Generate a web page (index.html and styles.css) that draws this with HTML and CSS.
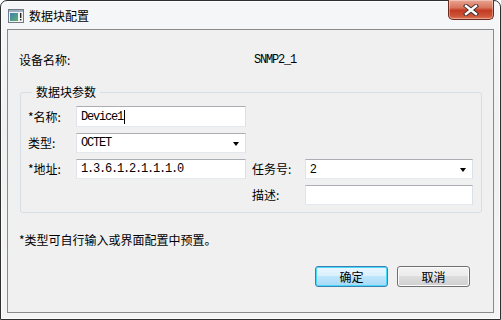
FILE: index.html
```html
<!DOCTYPE html>
<html lang="zh">
<head>
<meta charset="utf-8">
<link rel="stylesheet" href="styles.css">
</head>
<body>
<div class="window">
  <div class="titlebar">
    <svg class="app-icon" width="16" height="14" viewBox="0 0 16 14">
      <rect x="0.5" y="0.5" width="15" height="13" fill="#f4f4f4" stroke="#6f7a86"/>
      <rect x="1" y="1" width="14" height="2" fill="#9fb0c2"/>
      <defs><linearGradient id="g" x1="0" y1="0" x2="1" y2="1"><stop offset="0" stop-color="#3d7fb8"/><stop offset="1" stop-color="#5fb06a"/></linearGradient></defs>
      <rect x="2" y="4" width="8" height="8" fill="url(#g)"/>
      <rect x="12" y="4" width="1.4" height="5" fill="#222"/>
      <rect x="12" y="10" width="1.4" height="1.4" fill="#222"/>
    </svg>
    <span class="title">数据块配置</span>
    <div class="close">
      <svg width="18" height="12" viewBox="0 0 18 12">
        <path d="M4 2 L14 10 M14 2 L4 10" stroke="#3b2a2a" stroke-width="4.2" stroke-linecap="square"/>
        <path d="M4 2 L14 10 M14 2 L4 10" stroke="#ffffff" stroke-width="2.4" stroke-linecap="square"/>
      </svg>
    </div>
  </div>
  <div class="client">
    <div class="device-row">
      <span class="device-label">设备名称:</span>
      <span class="mono">SNMP2_1</span>
    </div>
    <fieldset class="group">
      <legend class="legend">数据块参数</legend>
      <div class="grid">
        <span class="label">*名称:</span>
        <div class="field text"><span class="mono">Device1</span><span class="caret"></span></div>
        <span class="spacer"></span>

        <span class="label">类型:</span>
        <div class="field combo"><span class="mono">OCTET</span><span class="arrow"></span></div>
        <span class="spacer"></span>

        <span class="label">*地址:</span>
        <div class="field text"><span class="mono">1.3.6.1.2.1.1.1.0</span></div>
        <span class="label label2">任务号:</span>
        <div class="field combo"><span class="sans">2</span><span class="arrow"></span></div>

        <span class="spacer"></span>
        <span class="label label2">描述:</span>
        <div class="field text"></div>
      </div>
    </fieldset>
    <div class="note">*类型可自行输入或界面配置中预置。</div>
    <div class="buttons">
      <button class="btn default">确定</button>
      <button class="btn">取消</button>
    </div>
  </div>
</div>
</body>
</html>
```

FILE: styles.css
```css
* { box-sizing: border-box; }
html, body { margin: 0; padding: 0; background: #ffffff; }
body {
  font-family: "Noto Sans CJK SC", "Noto Sans", sans-serif;
  font-size: 12px;
  color: #000;
}
.window {
  width: 501px;
  height: 320px;
  border: 1px solid #2f2f2f;
  border-radius: 7px 7px 0 0;
  background: linear-gradient(180deg, #f6f7f8 0%, #eff1f2 40%, #f4f4f4 100%);
  display: flex;
  flex-direction: column;
  box-shadow: inset 0 0 0 1px rgba(255,255,255,0.7);
}
.titlebar {
  height: 28px;
  display: flex;
  align-items: center;
  padding-left: 7px;
  padding-right: 6px;
}
.app-icon { flex: none; margin-top: 1px; }
.title {
  margin-left: 5px;
  font-size: 12px;
  line-height: 16px;
  color: #000;
  margin-top: 1px;
}
.close {
  margin-left: auto;
  align-self: flex-start;
  margin-top: -1px;
  width: 46px;
  height: 20px;
  border: 1px solid #6b2a20;
  border-top: none;
  border-radius: 0 0 5px 5px;
  background: linear-gradient(180deg, #e9a593 0%, #d8755d 40%, #c23b22 55%, #cf5538 85%, #e07a5c 100%);
  box-shadow: inset 0 0 0 1px rgba(255,255,255,0.35);
  display: flex;
  align-items: center;
  justify-content: center;
}
.client {
  margin: 0 6px 6px 6px;
  flex: 1;
  border: 1px solid #8a8a8a;
  background: #f0f0f0;
  display: flex;
  flex-direction: column;
}
.device-row {
  margin-top: 22px;
  padding-left: 11px;
  height: 16px;
  line-height: 16px;
  display: flex;
  align-items: center;
}
.device-label { width: 235px; }
.mono {
  font-family: "Liberation Mono", monospace;
  font-size: 12px;
  letter-spacing: -1.2px;
}
.sans { font-family: "Liberation Sans", sans-serif; font-size: 12px; }
.group {
  margin: 16px 0 0 12px;
  width: 462px;
  border: 1px solid #d5dfe5;
  border-radius: 3px;
  padding: 6px 0 7px 7px;
  min-width: 0;
}
.legend {
  margin-left: 4px;
  padding: 0 4px;
  line-height: 16px;
  height: 16px;
}
.grid {
  display: grid;
  grid-template-columns: 48px 170px 59px 168px;
  grid-template-rows: 21px 20px 20px 20px;
  row-gap: 6px;
  column-gap: 0;
}
.grid .label {
  display: flex;
  align-items: center;
  line-height: 16px;
}
.grid .label2 { padding-left: 6px; }
.spacer { grid-column: span 2; }
.field {
  background: #ffffff;
  border: 1px solid #abadb3;
  border-left-color: #e2e3ea;
  border-right-color: #dbdfe6;
  border-bottom-color: #e3e9ef;
  display: flex;
  align-items: center;
  padding-left: 4px;
}
.caret {
  display: inline-block;
  width: 1px;
  height: 14px;
  background: #000;
  margin-left: 1px;
}
.combo { padding-right: 6px; }
.arrow {
  margin-left: auto;
  width: 0;
  height: 0;
  border-left: 3.5px solid transparent;
  border-right: 3.5px solid transparent;
  border-top: 4px solid #000;
  margin-top: 1px;
}
.note {
  margin-top: 19px;
  padding-left: 11px;
  line-height: 16px;
}
.buttons {
  margin-top: 18px;
  display: flex;
  justify-content: flex-end;
  gap: 9px;
  padding-right: 23px;
}
.btn {
  width: 73px;
  height: 21px;
  font-family: "Noto Sans CJK SC", sans-serif;
  font-size: 12px;
  line-height: 16px;
  padding: 0;
  color: #000;
  border: 1px solid #707070;
  border-radius: 3px;
  background: linear-gradient(180deg, #f2f2f2 0%, #ebebeb 49%, #dddddd 50%, #cfcfcf 100%);
  box-shadow: inset 0 0 0 1px #fcfcfc;
}
.btn.default {
  border-color: #3c7fb1;
  background: linear-gradient(180deg, #eaf6fd 0%, #d9f0fc 49%, #bee6fd 50%, #a7d9f5 100%);
  box-shadow: inset 0 0 0 1px #48d8fb;
}
```
